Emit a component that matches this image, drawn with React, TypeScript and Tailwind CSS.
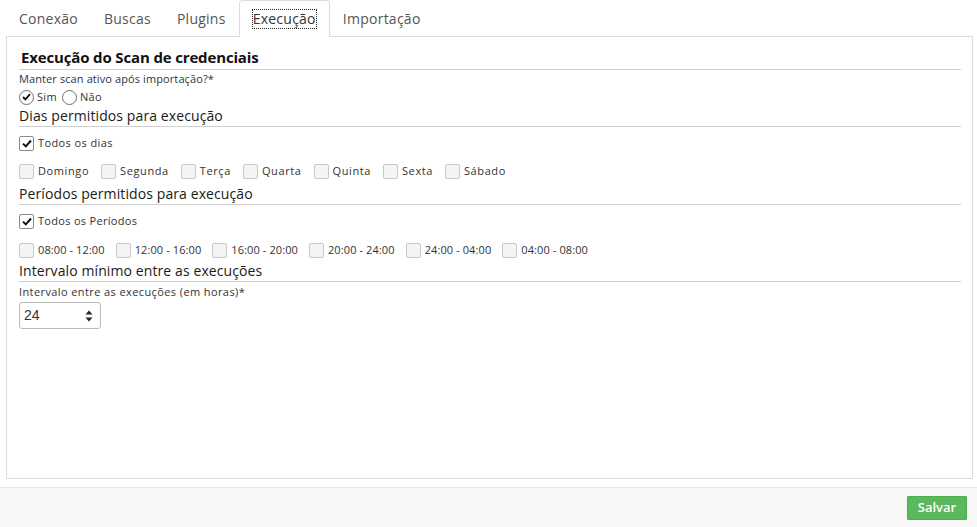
import { useState } from "react";

const font = "font-['Open_Sans','Liberation_Sans',sans-serif]";

const tabs = ["Conexão", "Buscas", "Plugins", "Execução", "Importação"];
const dias = ["Domingo", "Segunda", "Terça", "Quarta", "Quinta", "Sexta", "Sábado"];
const periodos = ["08:00 - 12:00", "12:00 - 16:00", "16:00 - 20:00", "20:00 - 24:00", "24:00 - 04:00", "04:00 - 08:00"];

function Check({ checked }: { checked?: boolean }) {
  return (
    <span
      className={`w-[15px] h-[15px] rounded-[2px] border flex items-center justify-center shrink-0 ${
        checked ? "border-[#8a8a8a] bg-white" : "border-[#c8c8c8] bg-[#f4f4f4]"
      }`}
    >
      {checked && (
        <svg width="10" height="9" viewBox="0 0 10 9">
          <path d="M1 4.6 L3.8 7.4 L9 1.5" fill="none" stroke="#111" strokeWidth="2" />
        </svg>
      )}
    </span>
  );
}

function Radio({ checked }: { checked?: boolean }) {
  return (
    <span className="w-[15px] h-[15px] rounded-full border border-[#6f6f6f] bg-white flex items-center justify-center shrink-0">
      {checked && (
        <svg width="9" height="8" viewBox="0 0 9 8">
          <path d="M1 4 L3.4 6.4 L8 1.2" fill="none" stroke="#111" strokeWidth="1.8" />
        </svg>
      )}
    </span>
  );
}

function Heading({ children }: { children: React.ReactNode }) {
  return (
    <div className="h-[22px] flex items-center border-b border-[#cfcfcf] text-[14px] text-[#1a1a1a] tracking-[0.1px]">
      {children}
    </div>
  );
}

export default function App() {
  const [tab] = useState("Execução");

  return (
    <div className={`h-[527px] w-[977px] flex flex-col bg-white ${font}`}>
      {/* abas */}
      <div className="h-[36px] flex items-end pl-[6px]">
        {tabs.map((t) => (
          <div
            key={t}
            className={`h-[36px] flex items-center px-[13px] text-[14px] tracking-[0.25px] ${
              t === tab
                ? "border border-[#dcdcdc] border-b-0 rounded-t-[4px] bg-white text-[#333] -mb-px h-[37px] relative z-10"
                : "text-[#555]"
            }`}
          >
            <span className={t === tab ? "outline-1 outline-dotted outline-[#222] leading-[18px]" : ""}>{t}</span>
          </div>
        ))}
      </div>

      {/* painel */}
      <div className="h-[443px] ml-[6px] mr-[4px] border border-[#dcdcdc] pl-[12px] pr-[11px]">
        <div className="h-[33px] flex items-end pb-[1px] border-b border-[#cfcfcf] pl-[2px] text-[15px] font-bold text-[#111] tracking-[-0.15px]">
          Execução do Scan de credenciais
        </div>
        <div className="h-[19px] flex items-center text-[11px] text-[#2b3544] tracking-[0.1px]">
          Manter scan ativo após importação?*
        </div>
        <div className="h-[16px] flex items-center gap-[3px] text-[11px] text-[#333] tracking-[0.3px]">
          <Radio checked />
          <span className="mr-[2px]">Sim</span>
          <Radio />
          <span>Não</span>
        </div>
        <Heading>Dias permitidos para execução</Heading>
        <div className="h-[32px] flex items-center gap-[4px] text-[11px] text-[#333] tracking-[0.4px]">
          <Check checked />
          <span>Todos os dias</span>
        </div>
        <div className="h-[24px] flex items-center text-[11px] text-[#333] tracking-[0.6px]">
          {dias.map((d) => (
            <div key={d} className="flex items-center gap-[4px] mr-[12px]">
              <Check />
              <span>{d}</span>
            </div>
          ))}
        </div>
        <Heading>Períodos permitidos para execução</Heading>
        <div className="h-[32px] flex items-center gap-[4px] text-[11px] text-[#333] tracking-[0.3px]">
          <Check checked />
          <span>Todos os Períodos</span>
        </div>
        <div className="h-[25px] flex items-center pt-[2px] -mb-[2px] text-[11px] text-[#333]">
          {periodos.map((p) => (
            <div key={p} className="flex items-center gap-[4px] mr-[11px]">
              <Check />
              <span className="tracking-[0.1px]">{p}</span>
            </div>
          ))}
        </div>
        <Heading>Intervalo mínimo entre as execuções</Heading>
        <div className="h-[20px] flex items-center text-[11px] text-[#333] tracking-[0.4px]">
          Intervalo entre as execuções (em horas)*
        </div>
        <div className="w-[82px] h-[27px] border border-[#bdbdbd] rounded-[3px] flex items-center justify-between pl-[4px] pr-[7px]">
          <span className="text-[14px] text-[#333] font-['Liberation_Sans',sans-serif]">24</span>
          <svg width="8" height="14" viewBox="0 0 8 14">
            <path d="M4 1.5 L7.5 5.5 L0.5 5.5 Z" fill="#222" />
            <path d="M0.5 8.5 L7.5 8.5 L4 12.5 Z" fill="#222" />
          </svg>
        </div>
      </div>

      {/* rodapé */}
      <div className="mt-[8px] flex-1 bg-[#f7f7f7] border-t border-[#e6e6e6] flex items-start justify-end pr-[10px] pt-[8px]">
        <button className="h-[24px] w-[60px] bg-[#5cb85c] border border-[#4cae4c] text-white text-[13px] font-semibold rounded-[1px]">
          Salvar
        </button>
      </div>
    </div>
  );
}
